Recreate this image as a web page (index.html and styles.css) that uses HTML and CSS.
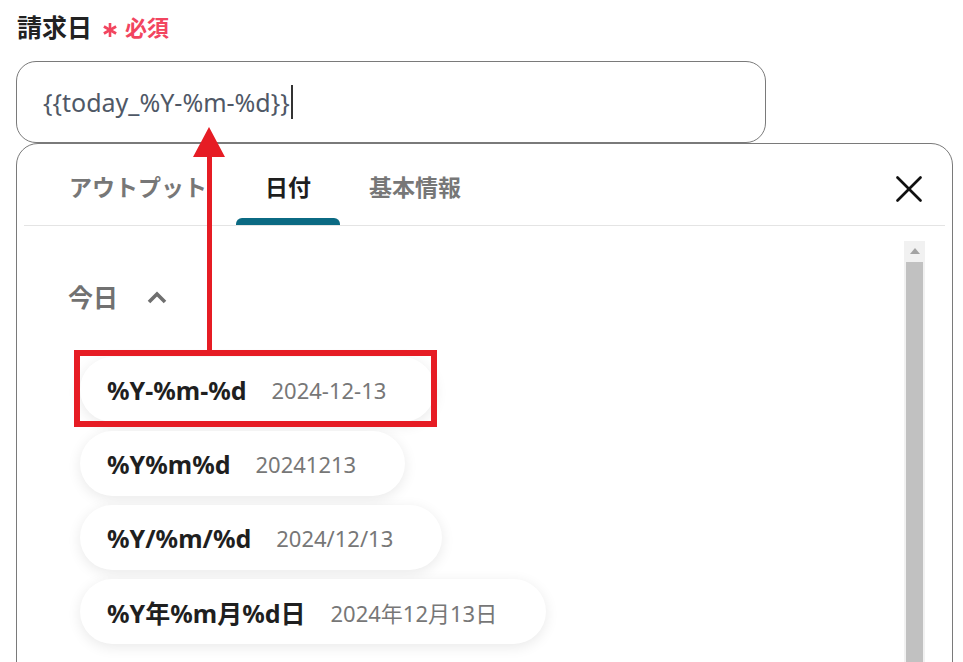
FILE: index.html
```html
<!DOCTYPE html>
<html lang="ja">
<head>
<meta charset="utf-8">
<link rel="stylesheet" href="styles.css">
</head>
<body>
<div class="page">
  <div class="label-row">
    <span class="label">請求日</span>
    <svg class="req-star" viewBox="0 0 16 16" width="16" height="16"><g stroke="currentColor" stroke-width="2.6" stroke-linecap="butt"><line x1="8" y1="1" x2="8" y2="15"/><line x1="1.9" y1="4.5" x2="14.1" y2="11.5"/><line x1="1.9" y1="11.5" x2="14.1" y2="4.5"/></g></svg>
    <span class="req">必須</span>
  </div>
  <div class="input"><span class="input-text">{{today_%Y-%m-%d}}</span><span class="caret"></span></div>
  <div class="popup">
    <div class="tabs-row">
      <div class="tabs">
        <div class="tab">アウトプット</div>
        <div class="tab active">日付</div>
        <div class="tab">基本情報</div>
      </div>
      <div class="close">
        <svg viewBox="0 0 26 26" width="26" height="26"><g stroke="#111" stroke-width="2.6" stroke-linecap="round"><line x1="1.5" y1="1.5" x2="24.5" y2="24.5"/><line x1="24.5" y1="1.5" x2="1.5" y2="24.5"/></g></svg>
      </div>
    </div>
    <div class="popup-body">
      <div class="content">
        <div class="section-head">
          <span class="section-title">今日</span>
          <svg class="chevron" viewBox="0 0 20 13" width="20" height="13"><polyline points="2,11 10,3 18,11" fill="none" stroke="#6f6f6f" stroke-width="3.6"/></svg>
        </div>
        <div class="items">
          <div class="item"><span class="fmt">%Y-%m-%d</span><span class="val">2024-12-13</span></div>
          <div class="item"><span class="fmt">%Y%m%d</span><span class="val">20241213</span></div>
          <div class="item"><span class="fmt">%Y/%m/%d</span><span class="val">2024/12/13</span></div>
          <div class="item"><span class="fmt">%Y年%m月%d日</span><span class="val">2024年12月13日</span></div>
        </div>
      </div>
      <div class="scrollbar">
        <div class="sb-up"><svg viewBox="0 0 10 6" width="10" height="6"><polygon points="0,6 5,0 10,6" fill="#a3a3a3"/></svg></div>
        <div class="sb-thumb"></div>
      </div>
    </div>
  </div>
  <div class="annot-box"></div>
  <svg class="annot-arrow" viewBox="0 0 40 230" width="40" height="230"><polygon points="19,2 3,32 35,32" fill="#e61c24"/><rect x="17" y="30" width="5" height="198" fill="#e61c24"/></svg>
</div>
</body>
</html>
```
FILE: styles.css
```css
* { box-sizing: border-box; }
html, body { margin: 0; padding: 0; background: #fff; }
body {
  font-family: "Noto Sans", "Noto Sans CJK JP", sans-serif;
  color: #222;
}
.page {
  position: relative;
  width: 963px;
  height: 662px;
  overflow: hidden;
  padding: 8px 0 0 16px;
}
.label-row {
  display: flex;
  align-items: center;
  height: 36px;
  padding-left: 1px;
}
.label {
  font-size: 25px;
  font-weight: 700;
  color: #222;
}
.req-star {
  color: #f2455f;
  margin-left: 10px;
  margin-top: 7px;
}
.req {
  color: #f2455f;
  font-size: 22px;
  font-weight: 700;
  margin-left: 7px;
}
.input {
  margin-top: 17px;
  width: 750px;
  height: 82px;
  border: 1px solid #7a7a7a;
  border-radius: 20px;
  display: flex;
  align-items: center;
  padding-left: 26px;
}
.input-text {
  font-size: 25px;
  color: #4f5866;
}
.caret {
  display: inline-block;
  width: 2px;
  height: 34px;
  background: #333;
  margin-left: 1px;
}
.popup {
  width: 937px;
  height: 640px;
  border: 1px solid #7a7a7a;
  border-radius: 22px;
  padding: 0 7px;
  background: #fff;
}
.tabs-row {
  display: flex;
  align-items: stretch;
  height: 82px;
  border-bottom: 1px solid #e4e4e4;
}
.tabs {
  display: flex;
  padding-left: 16px;
}
.tab {
  position: relative;
  display: flex;
  align-items: center;
  padding: 2px 29px 0;
  font-size: 23px;
  font-weight: 700;
  color: #777;
}
.tab.active { color: #1e1e1e; }
.tab.active::after {
  content: "";
  position: absolute;
  left: 0;
  right: 0;
  bottom: 0;
  height: 7px;
  border-radius: 6px 6px 0 0;
  background: #0b6a83;
}
.close {
  margin-left: auto;
  margin-right: 23px;
  display: flex;
  align-items: center;
  padding-top: 8px;
}
.popup-body {
  display: flex;
}
.content {
  flex: 1;
  padding-left: 44px;
}
.section-head {
  display: flex;
  align-items: center;
  height: 30px;
  margin-top: 55px;
}
.section-title {
  font-size: 25px;
  font-weight: 700;
  color: #717171;
}
.chevron {
  margin-left: 29px;
  margin-top: 2px;
}
.items {
  margin-top: 46px;
  margin-left: 12px;
  display: flex;
  flex-direction: column;
  align-items: flex-start;
  gap: 9px;
}
.item {
  display: flex;
  align-items: center;
  height: 65px;
  padding: 0 49px 0 27px;
  border-radius: 33px;
  background: #fff;
  box-shadow: 0 3px 14px rgba(0, 0, 0, 0.09);
}
.fmt {
  font-size: 25px;
  font-weight: 700;
  color: #1f1f1f;
}
.val {
  font-size: 22px;
  color: #777;
  margin-left: 25px;
}
.scrollbar {
  width: 21px;
  margin-top: 15px;
  margin-right: 20px;
  height: 440px;
  background: #f1f1f1;
  display: flex;
  flex-direction: column;
  align-items: center;
}
.sb-up {
  height: 21px;
  display: flex;
  align-items: center;
  justify-content: center;
  padding-bottom: 2px;
}
.sb-thumb {
  width: 17px;
  flex: 1;
  background: #c1c1c1;
}
.annot-box {
  position: absolute;
  left: 74px;
  top: 350px;
  width: 363px;
  height: 77px;
  border: 6px solid #e61c24;
}
.annot-arrow {
  position: absolute;
  left: 190px;
  top: 125px;
}
```
